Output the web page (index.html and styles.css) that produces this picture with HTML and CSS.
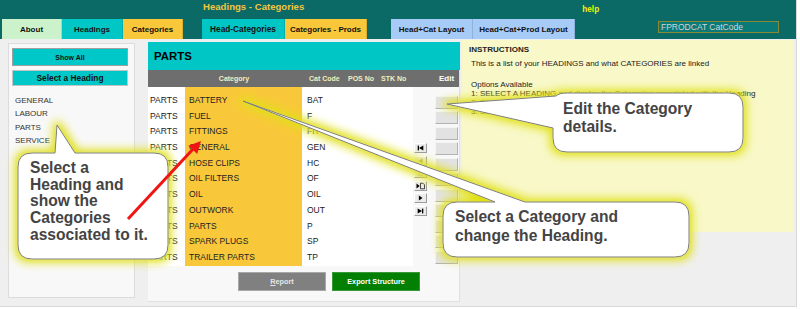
FILE: index.html
```html
<!DOCTYPE html>
<html lang="en">
<head>
  <meta charset="UTF-8" />
  <title>Headings - Categories</title>
  <link rel="stylesheet" href="styles.css">
</head>
<body>
<div class="app">

  <div class="topbar">
    <div class="title-row">
      <span class="title">Headings - Categories</span>
      <span class="help">help</span>
    </div>
    <div class="tabs">
      <span class="tab tab-green w60">About</span>
      <span class="tab tab-teal w61">Headings</span>
      <span class="tab tab-yellow w60">Categories</span>
      <span class="tab tab-teal tab-active w83">Head-Categories</span>
      <span class="tab tab-yellow w82">Categories - Prods</span>
      <span class="tab tab-blue w82 gap-blue">Head+Cat Layout</span>
      <span class="tab tab-blue w102">Head+Cat+Prod Layout</span>
      <input class="code-box" type="text" value="FPRODCAT CatCode">
    </div>
  </div>

  <div class="content">
    <!-- headings list -->
    <div class="headings">
      <button class="btn-teal btn-showall">Show All</button>
      <button class="btn-teal btn-select">Select a Heading</button>
      <div class="heading-list">
        <div>GENERAL</div>
        <div>LABOUR</div>
        <div>PARTS</div>
        <div>SERVICE</div>
      </div>
    </div>

    <!-- categories for the heading -->
    <div class="parts">
      <div class="parts-title">PARTS</div>
      <div class="parts-body">
        <div class="thead">
          <span class="th-cat">Category</span>
          <span class="th-code">Cat Code</span>
          <span class="th-pos">POS No</span>
          <span class="th-stk">STK No</span>
          <span class="th-edit">Edit</span>
        </div>
        <div class="grid-area">
          <div class="table-box">
            <div class="col col-head">
              <div>PARTS</div><div>PARTS</div><div>PARTS</div><div>PARTS</div>
              <div>PARTS</div><div>PARTS</div><div>PARTS</div><div>PARTS</div>
              <div>PARTS</div><div>PARTS</div><div>PARTS</div>
            </div>
            <div class="col col-cat">
              <div>BATTERY</div><div>FUEL</div><div>FITTINGS</div><div>GENERAL</div>
              <div>HOSE CLIPS</div><div>OIL FILTERS</div><div>OIL</div><div>OUTWORK</div>
              <div>PARTS</div><div>SPARK PLUGS</div><div>TRAILER PARTS</div>
            </div>
            <div class="col col-code">
              <div>BAT</div><div>F</div><div>FIT</div><div>GEN</div>
              <div>HC</div><div>OF</div><div>OIL</div><div>OUT</div>
              <div>P</div><div>SP</div><div>TP</div>
            </div>
          </div>
          <div class="nav-col">
            <span class="nav-btn"><svg viewBox="0 0 13 10"><rect x="3" y="2" width="1.6" height="6"/><path d="M10 2 L4.6 5 L10 8Z"/></svg></span>
            <span class="nav-btn"><svg viewBox="0 0 13 10"><path d="M9 2 L4 5 L9 8Z" fill="#a4a468"/></svg></span>
            <span class="nav-btn"><svg viewBox="0 0 13 10"><rect x="4.5" y="1.5" width="4" height="7" fill="none" stroke="#b4b4b4"/></svg></span>
            <span class="nav-btn"><svg viewBox="0 0 13 10"><path d="M1.5 2 L5.5 5 L1.5 8Z"/><path d="M6.5 1.5 H9.5 L11.5 3.5 V8.5 H6.5 Z" fill="none" stroke="#000" stroke-width="0.9"/></svg></span>
            <span class="nav-btn"><svg viewBox="0 0 13 10"><path d="M4.5 2 L9 5 L4.5 8Z"/></svg></span>
            <span class="nav-btn"><svg viewBox="0 0 13 10"><path d="M3 2 L8.4 5 L3 8Z"/><rect x="8.4" y="2" width="1.6" height="6"/></svg></span>
          </div>
          <div class="edit-col">
            <button></button><button></button><button></button><button></button>
            <button></button><button></button><button></button><button></button>
            <button></button><button></button><button></button>
          </div>
        </div>
        <div class="actions">
          <button class="btn-report"><u>R</u>eport</button>
          <button class="btn-export">Export Structure</button>
        </div>
      </div>
    </div>

    <!-- instructions -->
    <div class="instructions">
      <div class="ins-title">INSTRUCTIONS</div>
      <div class="ins-intro">This is a list of your HEADINGS and what CATEGORIES are linked</div>
      <div class="ins-options">Options Available</div>
      <div class="ins-line">1: SELECT A HEADING and display the Categories associated with the Heading</div>
      <div class="ins-line">2: SELECT A CATEGORY</div>
      <div class="ins-line">3: SELECT THE 'EDIT'</div>
    </div>
  </div>

  <!-- callouts drawn over the screen -->
  <svg class="overlay" width="800" height="309" viewBox="0 0 800 309">
    <defs>
      <filter id="glow" filterUnits="userSpaceOnUse" x="0" y="0" width="800" height="309">
        <feMorphology in="SourceAlpha" operator="dilate" radius="3" result="wide"/>
        <feGaussianBlur in="wide" stdDeviation="4.5" result="blur"/>
        <feFlood flood-color="#e0e018"/>
        <feComposite in2="blur" operator="in" result="halo"/>
        <feMerge><feMergeNode in="halo"/><feMergeNode in="SourceGraphic"/></feMerge>
      </filter>
    </defs>
    <path class="bubble" d="M457 202 H495 L243 101 L525 202 H675 Q689 202 689 216 V243 Q689 257 675 257 H457 Q443 257 443 243 V216 Q443 202 457 202 Z"/>
    <path class="bubble" d="M567 93 H729 Q743 93 743 107 V138 Q743 152 729 152 H567 Q553 152 553 138 V128 L447 104 L556 96 Q559 93 567 93 Z"/>
    <path class="bubble" d="M32 153 H55 L57 125 L75 153 H154 Q168 153 168 167 V245 Q168 259 154 259 H32 Q18 259 18 245 V167 Q18 153 32 153 Z"/>
    <line x1="128" y1="219" x2="194" y2="148" stroke="#f01414" stroke-width="3"/>
    <path d="M201 141 L197.2 153.9 L188.4 145.7 Z" fill="#f01414"/>
  </svg>
  <div class="callout callout-edit">Edit the Category<br>details.</div>
  <div class="callout callout-heading">Select a<br>Heading and<br>show the<br>Categories<br>associated to it.</div>
  <div class="callout callout-category">Select a Category and<br>change the Heading.</div>

</div>
</body>
</html>
```
FILE: styles.css
```css
* {
  box-sizing: border-box;
}

body {
  margin: 0;
  background: #ffffff;
  font-family: "Liberation Sans", Arial, sans-serif;
  color: #222;
}

.app {
  position: relative;
  width: 797px;
  height: 307px;
  overflow: hidden;
  background: #efefef;
  border-right: 1px solid #d8d8d8;
  border-bottom: 1px solid #d8d8d8;
}

/* top bar */
.topbar {
  background: #0b6966;
  height: 39px;
}
.title-row {
  height: 19px;
  display: flex;
  align-items: flex-start;
}
.title {
  margin-left: 203px;
  margin-top: 1px;
  font-size: 9.6px;
  line-height: 12px;
  font-weight: bold;
  color: #f2c640;
  white-space: nowrap;
}
.help {
  margin-left: 278px;
  margin-top: 5px;
  font-size: 8.2px;
  line-height: 10px;
  font-weight: bold;
  color: #f4f400;
}

.tabs {
  display: flex;
  height: 20px;
  padding-left: 2px;
}
.tab {
  display: flex;
  align-items: center;
  justify-content: center;
  font-size: 8px;
  font-weight: bold;
  color: #111;
  white-space: nowrap;
  border-right: 1px solid rgba(0, 0, 0, 0.12);
}
.w60 { width: 60px; }
.w61 { width: 61px; }
.w82 { width: 82px; }
.w83 { width: 83px; margin-left: 19px; }
.w102 { width: 102px; }
.gap-blue { margin-left: 24px; }
.tab-green { background: #ccf2cc; }
.tab-teal { background: #00c6c6; }
.tab-yellow { background: #f8c83a; }
.tab-blue { background: #a6cbf6; }
.tab-active { font-size: 8.3px; }

.code-box {
  margin-left: 83px;
  margin-top: 2px;
  width: 121px;
  height: 12px;
  padding: 0 2px;
  background: #0a7a78;
  border: 1px solid #8a8a36;
  color: #d4d4d4;
  font-family: "Liberation Sans", Arial, sans-serif;
  font-size: 8.5px;
}

/* main area */
.content {
  display: flex;
  align-items: flex-start;
  padding-left: 8px;
}

.headings {
  width: 127px;
  height: 255px;
  margin-top: 4px;
  padding: 4px 3px;
  background: #f8f8f8;
  border: 1px solid #dcdcdc;
  display: flex;
  flex-direction: column;
}
.btn-teal {
  width: 116px;
  background: #00c8c8;
  border: 1px solid #a0a0a0;
  font-family: "Liberation Sans", Arial, sans-serif;
  font-weight: bold;
  color: #111;
  padding: 0;
}
.btn-showall {
  height: 18px;
  font-size: 7px;
}
.btn-select {
  height: 16px;
  margin-top: 4px;
  border-color: #c4c4c4;
  font-size: 8.4px;
}
.heading-list {
  margin-top: 8px;
  padding-left: 3px;
  font-size: 8px;
  line-height: 13.3px;
  color: #333;
}

.parts {
  width: 312px;
  margin-left: 13px;
  margin-top: 3px;
}
.parts-title {
  height: 28px;
  background: #00c6c6;
  padding-left: 6px;
  display: flex;
  align-items: center;
  font-size: 11.4px;
  font-weight: bold;
  color: #000;
}
.parts-body {
  height: 232px;
  background: #f8f8f8;
  border-right: 1px solid #e0e0e0;
  border-bottom: 1px solid #e0e0e0;
}
.thead {
  height: 17px;
  background: #6e6e6e;
  display: flex;
  align-items: center;
  font-size: 7px;
  font-weight: bold;
  color: #f2eebe;
  white-space: nowrap;
}
.thead span {
  flex: none;
}
.th-cat {
  margin-left: 37px;
  width: 98px;
  text-align: center;
}
.th-code {
  width: 61px;
  padding-left: 26px;
}
.th-pos {
  width: 33px;
  padding-left: 4px;
}
.th-stk {
  width: 58px;
  padding-left: 4px;
}
.th-edit {
  padding-left: 4px;
  font-size: 8px;
  color: #ffffff;
}

.grid-area {
  display: flex;
  align-items: flex-start;
}
.table-box {
  display: flex;
  width: 265px;
  height: 179px;
  background: #ffffff;
}
.col {
  padding-top: 6px;
  font-size: 8.5px;
  color: #222;
  white-space: nowrap;
}
.col div {
  height: 15.7px;
  line-height: 15.7px;
}
.col-head {
  width: 37px;
  padding-left: 2px;
}
.col-cat {
  width: 117px;
  padding-left: 4px;
  background: #f8c83a;
}
.col-code {
  flex: 1;
  padding-left: 5px;
}

.nav-col {
  display: flex;
  flex-direction: column;
  gap: 2.6px;
  margin-left: 1px;
  padding-top: 56px;
}
.nav-btn {
  display: block;
  width: 13px;
  height: 10px;
  background: #ececec;
  border: 1px solid #9c9c9c;
  border-top-color: #ffffff;
  border-left-color: #ffffff;
}
.nav-btn svg {
  display: block;
  width: 11px;
  height: 8px;
}

.edit-col {
  display: flex;
  flex-direction: column;
  gap: 2.5px;
  margin-left: 8px;
  padding-top: 8.5px;
}
.edit-col button {
  width: 23px;
  height: 13px;
  padding: 0;
  background: #e2e2e2;
  border: 1px solid #b2b2b2;
  border-top-color: #f4f4f4;
  border-left-color: #f4f4f4;
}

.actions {
  display: flex;
  gap: 6px;
  padding-left: 90px;
  margin-top: 6px;
}
.actions button {
  width: 88px;
  height: 19px;
  padding: 0;
  font-family: "Liberation Sans", Arial, sans-serif;
  font-size: 7.3px;
  font-weight: bold;
}
.btn-report {
  background: #808080;
  border: 1px solid #a8a8a8;
  color: #e6e6e6;
}
.btn-export {
  background: #038003;
  border: 1px solid #3a9a3a;
  color: #ffffff;
}

.instructions {
  width: 331px;
  height: 192px;
  margin-left: 2px;
  margin-top: 1px;
  padding: 5px 0 0 7px;
  background: #f8f8c8;
  font-size: 8px;
  line-height: 9px;
  color: #222;
  white-space: nowrap;
}
.ins-title {
  font-weight: bold;
}
.ins-intro {
  margin-top: 5px;
  padding-left: 2px;
}
.ins-options {
  margin-top: 11.5px;
  padding-left: 2px;
}
.ins-line {
  padding-left: 2px;
}

/* callouts */
.overlay {
  position: absolute;
  left: 0;
  top: 0;
  pointer-events: none;
}
.bubble {
  fill: #ffffff;
  stroke: #7c7c7c;
  stroke-width: 1;
  filter: url(#glow);
}
.callout {
  position: absolute;
  font-weight: bold;
  color: #444;
  white-space: nowrap;
}
.callout-edit {
  left: 563px;
  top: 100px;
  font-size: 15.6px;
  line-height: 18px;
}
.callout-heading {
  left: 30px;
  top: 160px;
  font-size: 15.6px;
  line-height: 16.7px;
}
.callout-category {
  left: 455px;
  top: 208px;
  font-size: 15.6px;
  line-height: 18.5px;
}
```
